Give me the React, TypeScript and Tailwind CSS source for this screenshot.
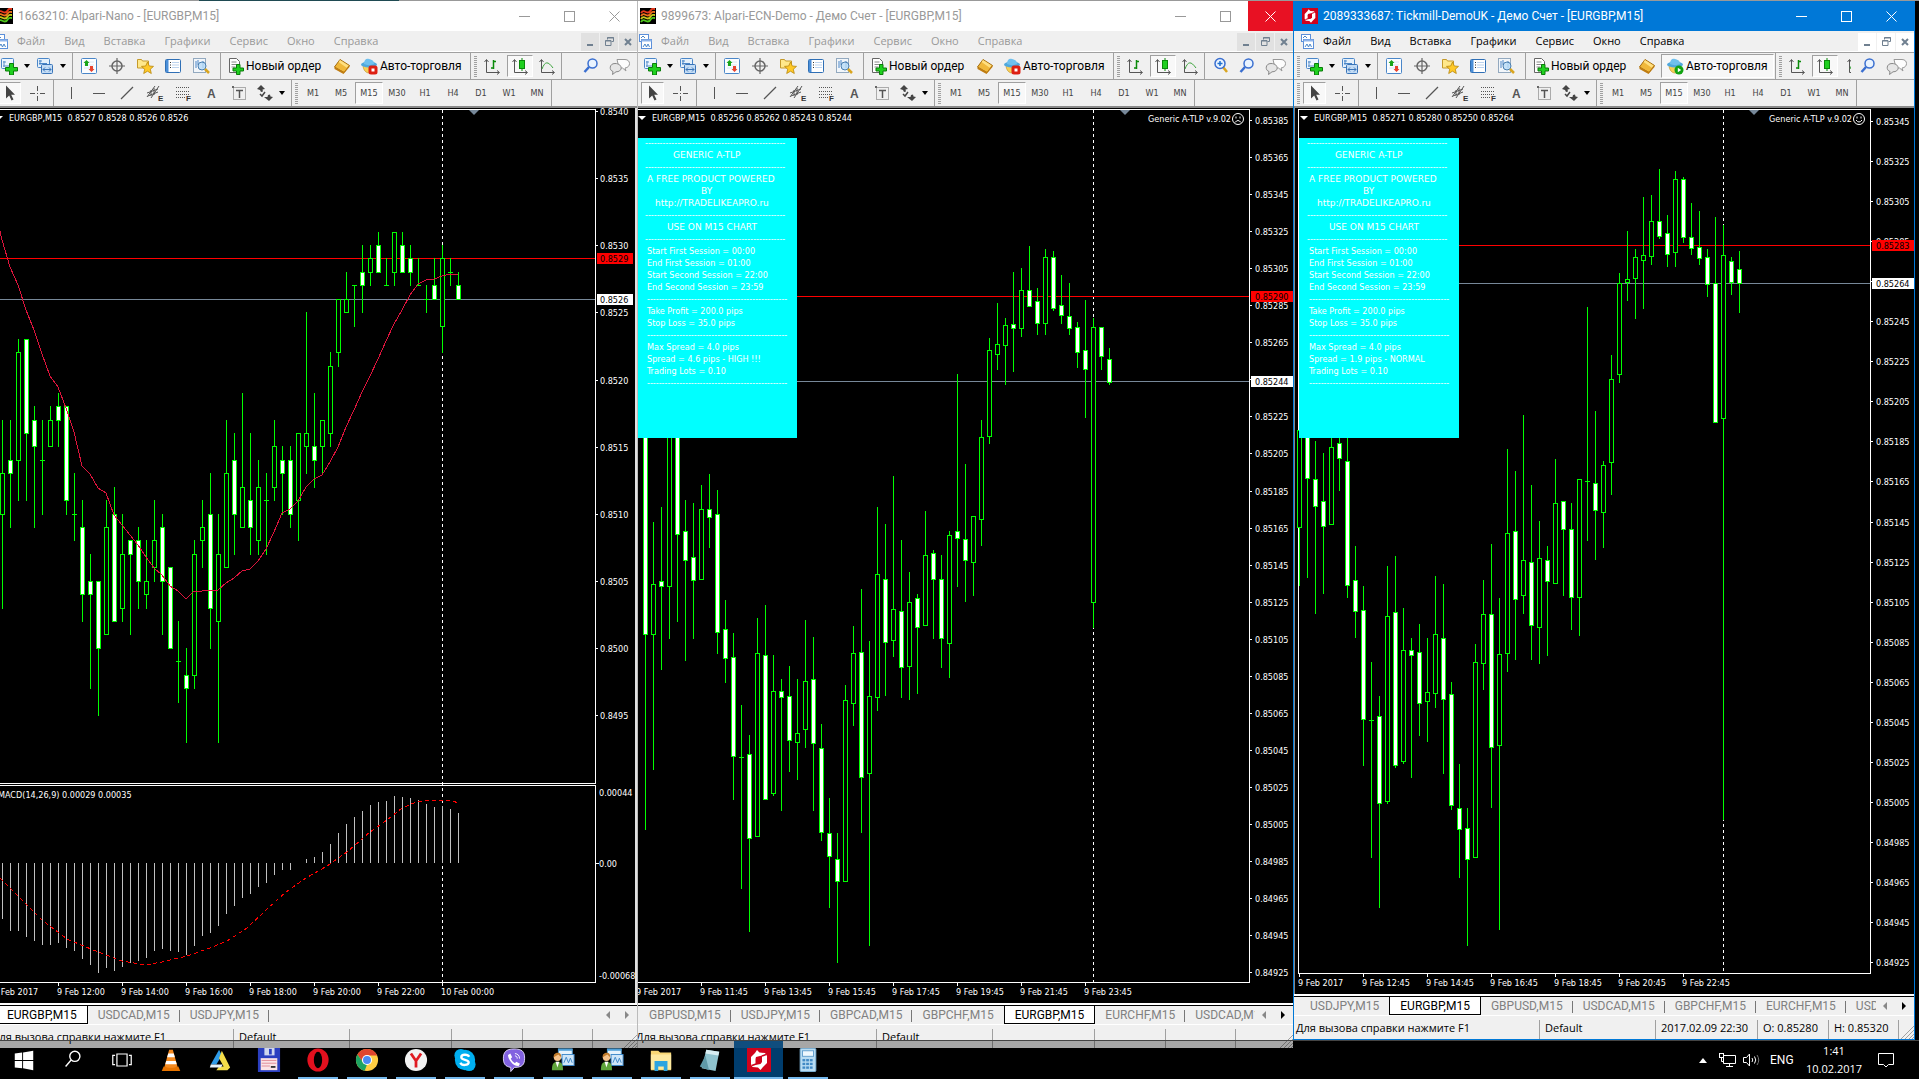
import React from "react";

type Candle = [number, number, number, number, number?];
type Label = { text: string; y: number };

const UI = "font-[Roboto,'Noto_Sans',sans-serif]";
const UI_SMALL = "font-['Open_Sans','Noto_Sans',sans-serif] text-[11px]";
const CHART_FONT = "'DejaVu Sans Condensed','DejaVu Sans',sans-serif";

/* ---------- chart data: [high, body top, body bottom, low, filled] ---------- */

const nanoPips: Candle[] = [
  [17, 13, 10, 3], [17, 14, 13, 9, 1], [23, 22, 14, 11], [23, 23, 16, 11, 1], [18, 17, 15, 9, 1], [17, 14, 14, 10],
  [18, 17, 15, 15], [19, 18, 17, 15, 1], [18, 18, 11, 10, 1], [13, 10, 10, 8], [11, 9, 4, 2, 1], [7, 5, 4, -3, 1],
  [5, 5, 0, -5, 1], [11, 9, 1, 1], [12, 10, 2, 2, 1], [10, 7, 3, 2], [8, 8, 7, 1, 1], [9, 8, 5, 3, 1],
  [8, 5, 4, 3], [11, 8, 6, 5], [10, 9, 5, 1, 1], [6, 6, 0, 0, 1], [2, -1, -1, -4], [0, -2, -3, -7, 1],
  [8, 7, -2, -3], [11, 9, 8, 6], [13, 10, 3, 0, 1], [10, 7, 2, -7], [17, 13, 6, 6], [16, 14, 10, 7, 1],
  [19, 12, 9, 9], [16, 11, 9, 7, 1], [14, 12, 8, 7], [13, 11, 11, 7], [17, 15, 12, 11], [15, 14, 13, 10, 1],
  [15, 14, 10, 9, 1], [16, 16, 11, 8], [25, 16, 15, 13], [19, 15, 14, 12, 1], [17, 17, 15, 13], [22, 21, 16, 15],
  [26, 26, 22, 21], [28, 26, 25, 25], [27, 27, 27, 24], [30, 28, 27, 25, 1], [30, 29, 28, 27], [31, 30, 28, 28, 1],
  [29, 27, 27, 27], [31, 31, 28, 27], [31, 30, 28, 28, 1], [30, 29, 28, 27, 1], [29, 27, 27, 27], [27, 26, 26, 25],
  [29, 27, 26, 26, 1], [30, 29, 24, 22], [29, 28, 28, 27], [28, 27, 26, 26, 1],
];
const pipY = (p: number) => Math.round(245 + (30 - p) * 13.43);
const nanoCandles = nanoPips.map((c) => [pipY(c[0]), pipY(c[1]), pipY(c[2]), pipY(c[3]), c[4]] as Candle);

const nanoAverage = [
  240, 267, 285, 310, 330, 354, 376, 387, 408, 432, 466, 474, 488, 493, 515, 525, 535, 545, 557, 568, 575, 586, 591, 599,
  591, 591, 590, 590, 583, 578, 571, 569, 561, 549, 532, 513, 509, 501, 487, 479, 475, 462, 447, 427, 410, 392, 376, 359,
  341, 324, 310, 295, 284, 280, 279, 276, 274, 275,
];
const macdBars = [
  919, 931, 931, 937, 941, 945, 945, 943, 948, 951, 959, 965, 973, 968, 971, 967, 963, 961, 958, 951, 949, 951, 952, 955,
  946, 936, 933, 926, 914, 906, 898, 894, 887, 883, 875, 870, 870, 863, 859, 857, 852, 844, 833, 824, 817, 811, 805, 802,
  801, 796, 797, 798, 800, 804, 807, 806, 809, 813,
];
const macdSignal =
  "0,878 18,896 42,920 67,939 98,952 122,961 145,965 162,962 187,956 210,948 227,941 247,928 265,911 286,892 306,878 327,866 347,852 370,832 387,820 402,808 414,803 427,800 443,800 453,801 458,803";

const ecnCandles: Candle[] = [
  [430, 430, 634, 829, 1], [522, 584, 634, 769], [507, 581, 586, 669, 1], [430, 430, 586, 638], [430, 430, 534, 621, 1],
  [500, 531, 560, 660, 1], [503, 557, 580, 638, 1], [485, 509, 579, 579], [474, 509, 517, 547, 1], [490, 514, 632, 653, 1],
  [600, 629, 658, 682, 1], [633, 657, 756, 799, 1], [705, 757, 757, 888], [735, 754, 838, 931, 1], [618, 653, 836, 836],
  [605, 655, 799, 799, 1], [655, 691, 793, 795], [679, 691, 697, 810, 1], [666, 696, 740, 771, 1], [679, 733, 742, 779],
  [620, 681, 729, 747], [637, 679, 743, 810, 1], [724, 748, 832, 840, 1], [798, 833, 856, 907, 1], [833, 859, 881, 962, 1],
  [685, 700, 881, 881], [626, 653, 703, 725], [589, 652, 777, 832, 1], [641, 696, 773, 945], [507, 574, 697, 710],
  [524, 579, 642, 695, 1], [476, 609, 640, 656], [540, 611, 667, 697, 1], [572, 602, 666, 699], [594, 598, 627, 693, 1],
  [511, 555, 625, 625], [550, 553, 579, 638, 1], [555, 579, 638, 667, 1], [531, 535, 643, 677], [374, 531, 538, 586, 1],
  [464, 539, 560, 601, 1], [516, 516, 562, 595], [420, 437, 519, 545], [338, 350, 436, 443], [303, 344, 354, 369],
  [318, 325, 345, 384], [272, 324, 328, 371, 1], [268, 290, 328, 336], [246, 290, 306, 306, 1], [288, 301, 323, 334, 1],
  [249, 257, 323, 334], [251, 257, 308, 310, 1], [275, 305, 315, 323, 1], [283, 316, 328, 334, 1], [322, 327, 352, 367, 1],
  [300, 350, 369, 417, 1], [318, 327, 602, 627], [327, 327, 356, 369, 1], [348, 359, 382, 384, 1],
];

const tickCandles: Candle[] = [
  [430, 430, 527, 585], [430, 430, 478, 577, 1], [441, 479, 506, 613, 1], [453, 501, 526, 593, 1], [430, 447, 524, 524],
  [430, 443, 458, 490, 1], [430, 461, 585, 597, 1], [546, 580, 611, 637, 1], [586, 610, 719, 765, 1], [662, 720, 720, 857],
  [696, 716, 803, 907, 1], [566, 616, 801, 803], [556, 612, 765, 767, 1], [608, 650, 761, 763], [638, 650, 655, 777, 1],
  [624, 652, 703, 735, 1], [638, 692, 701, 741], [576, 634, 693, 707], [584, 638, 699, 773, 1], [682, 694, 805, 809, 1],
  [764, 808, 829, 877, 1], [808, 828, 859, 945, 1], [644, 662, 857, 857], [580, 614, 663, 689], [544, 614, 747, 807, 1],
  [598, 654, 745, 929], [449, 533, 653, 671], [471, 531, 599, 659, 1], [415, 560, 595, 613], [485, 562, 625, 659, 1],
  [521, 558, 627, 663], [546, 560, 581, 655, 1], [459, 503, 583, 583], [501, 501, 529, 595, 1], [503, 529, 597, 629, 1],
  [479, 479, 597, 635], [307, 481, 481, 540], [411, 483, 510, 559, 1], [461, 465, 512, 547], [355, 379, 462, 494],
  [273, 283, 374, 382], [231, 279, 282, 300], [249, 257, 278, 318], [197, 255, 260, 308], [195, 221, 256, 264],
  [169, 221, 236, 238, 1], [215, 233, 254, 266, 1], [171, 179, 252, 266], [177, 179, 237, 242, 1], [203, 237, 248, 254, 1],
  [211, 247, 258, 264, 1], [249, 257, 284, 296, 1], [217, 283, 422, 422, 1], [225, 255, 418, 819], [257, 261, 282, 294, 1],
  [251, 269, 283, 312, 1],
];

const priceLabels = (start: number, step: number, count: number, y0: number, dy: number, digits: number): Label[] =>
  Array.from({ length: count }, (_, i) => ({
    text: ((start - step * i) / 100000).toFixed(digits),
    y: Math.round(y0 + dy * i),
  }));

/* ---------- chart drawing ---------- */

function Candles({ x0, data }: { x0: number; data: Candle[] }) {
  return (
    <g fill="#000" stroke="#0f0" strokeWidth="1">
      {data.map(([hi, top, bottom, lo, filled], i) => {
        const x = x0 + i * 8 + 0.5;
        return (
          <g key={i}>
            <line x1={x} x2={x} y1={hi} y2={lo + 1} />
            {top === bottom ? (
              <line x1={x - 2.5} x2={x + 2.5} y1={top + 0.5} y2={top + 0.5} />
            ) : (
              <rect x={x - 2} y={top + 0.5} width="4" height={bottom - top} fill={filled ? "#fff" : "#000"} />
            )}
          </g>
        );
      })}
    </g>
  );
}

interface ChartProps {
  dx: number;
  left: number;
  axis: number;
  bottom: number;
  x0: number;
  candles: Candle[];
  labels: Label[];
  dates: [number, string][];
  ask: [number, string];
  bid: [number, string];
  now: number;
  marker: number;
  title: string;
  titleX: number;
  expert?: "sad" | "happy";
  macd?: boolean;
  labelX: number;
}

function Chart(p: ChartProps) {
  const tagW = p.macd ? 36 : 42;
  return (
    <svg className="block h-full w-full" role="img" aria-label={p.title} fontFamily={CHART_FONT} fontSize="9" fill="#fff">
      <g transform={`translate(${-p.dx},-108)`}>
        <g shapeRendering="crispEdges">
          <g stroke="#fff" fill="none">
            <path d={`M${p.left} 109.5H${p.axis + 0.5}V${p.bottom + 0.5}H${p.left}`} />
            {p.left > p.dx && <path d={`M${p.left + 0.5} 109V${p.bottom}`} />}
            {p.macd && <path d={`M0 783.5H${p.axis}M0 785.5H${p.axis}`} />}
            {p.macd && <path d={`M0 784.5H${p.axis + 1}`} stroke="#000" />}
            <path d={`M${p.now + 0.5} 110V${p.bottom}`} strokeDasharray="3 3" />
            {p.labels.map((l) => (
              <path key={l.text} d={`M${p.axis + 1} ${l.y + 0.5}h2`} />
            ))}
            {p.dates.map(([x]) => (
              <path key={x} d={`M${x + 0.5} ${p.bottom + 1}v3`} />
            ))}
          </g>
          <path d={`M${p.left + (p.left > p.dx ? 1 : 0)} ${p.bid[0] + 0.5}H${p.axis}`} stroke="#778899" />
          <path d={`M${p.left + (p.left > p.dx ? 1 : 0)} ${p.ask[0] + 0.5}H${p.axis}`} stroke="#f00" />
          <Candles x0={p.x0} data={p.candles} />
          {p.macd && (
            <g stroke="#c0c0c0">
              {macdBars.map((y, i) => (
                <line key={i} x1={2.5 + i * 8} x2={2.5 + i * 8} y1="863" y2={y} />
              ))}
            </g>
          )}
          {p.macd && (
            <g fill="none">
              <polyline
                points={"0,231 " + nanoAverage.map((y, i) => `${2 + i * 8},${y}`).join(" ")}
                stroke="#dc143c"
              />
              <polyline points={macdSignal} stroke="#f00" strokeDasharray="4 3" />
            </g>
          )}
        </g>
        <path d={`M${p.marker - 5} 110h10l-5 5z`} fill="#778899" />
        {p.labels.map((l) => (
          <text key={l.text} x={p.labelX} y={l.y + 4}>
            {l.text}
          </text>
        ))}
        <g shapeRendering="crispEdges">
          <rect x={p.axis + 2} y={p.ask[0] - 5} width={tagW} height="11" fill="#f00" />
          <rect x={p.axis + 2} y={p.bid[0] - 5} width={tagW} height="11" fill="#fff" />
        </g>
        <g fill="#000">
          <text x={p.labelX} y={p.ask[0] + 4}>{p.ask[1]}</text>
          <text x={p.labelX} y={p.bid[0] + 4}>{p.bid[1]}</text>
        </g>
        {p.dates.map(([x, text]) => (
          <text key={x} x={x - 1} y={p.bottom + 13}>
            {text}
          </text>
        ))}
        <path d={`M${p.titleX - 14} 116h8l-4 4z`} />
        <text x={p.titleX} y="121" xmlSpace="preserve">
          {p.title}
        </text>
        {p.macd && (
          <g>
            <text x="-2" y="798">MACD(14,26,9) 0.00029 0.00035</text>
            <text x="599" y="796">0.00044</text>
            <text x="599" y="867">0.00</text>
            <text x="599" y="979">-0.00068</text>
            <path d="M596 863.5h3" stroke="#fff" />
          </g>
        )}
        {p.expert && (
          <g>
            <text x={p.axis - 18} y="122" textAnchor="end">
              Generic A-TLP v.9.02
            </text>
            <g transform={`translate(${p.axis - 11},119)`} fill="none" stroke="#fff">
              <circle r="5.5" />
              <path d={p.expert === "sad" ? "M-3 3.5Q0 -.5 3 3.5" : "M-3 1Q0 5 3 1"} />
              <path d="M-2 -2.5v2M2 -2.5v2" />
            </g>
          </g>
        )}
      </g>
    </svg>
  );
}

const dashes = "-".repeat(48);
const caps = "font-['DejaVu_Sans',sans-serif]";

function ExpertPanel({ spread, offset }: { spread: string; offset: string }) {
  const lines: [string, string][] = [
    ["pl-2", dashes], [`pl-9 ${caps}`, "GENERIC A-TLP"], ["pl-2", dashes], [`pl-2.5 ${caps}`, "A FREE PRODUCT POWERED"],
    [`pl-16 ${caps}`, "BY"], [`pl-[18px] ${caps}`, "http://TRADELIKEAPRO.ru"], ["pl-2", dashes],
    [`pl-[30px] ${caps}`, "USE ON M15 CHART"], ["pl-2", dashes],
    ["pl-2.5", "Start First Session = 00:00"], ["pl-2.5", "End First Session = 01:00"],
    ["pl-2.5", "Start Second Session = 22:00"], ["pl-2.5", "End Second Session = 23:59"], ["pl-2.5", dashes],
    ["pl-2.5", "Take Profit = 200.0 pips"], ["pl-2.5", "Stop Loss = 35.0 pips"], ["pl-2.5", dashes],
    ["pl-2.5", "Max Spread = 4.0 pips"], ["pl-2.5", spread], ["pl-2.5", "Trading Lots = 0.10"], ["pl-2.5", dashes],
  ];
  return (
    <div
      className={`absolute top-[30px] h-[300px] w-40 overflow-hidden bg-[#00ffff] font-['DejaVu_Sans_Condensed','DejaVu_Sans',sans-serif] text-[9px] leading-3 text-white ${offset}`}
    >
      <div className="-mt-px">
        {lines.map(([cls, text], i) => (
          <div key={i} className={`h-3 whitespace-nowrap ${cls}`}>
            {text}
          </div>
        ))}
      </div>
    </div>
  );
}

/* ---------- toolbar icons ---------- */

type IconProps = { w?: number; children: React.ReactNode };
const Svg = ({ w = 18, children }: IconProps) => (
  <svg width={w} height="18" viewBox={`0 0 ${w} 18`} fill="none" className="shrink-0" aria-hidden="true">
    {children}
  </svg>
);

const NewChart = () => (
  <Svg>
    <rect x="1.5" y="1.5" width="12" height="10" rx="1" fill="#eef6ff" stroke="#4a86c8" />
    <path d="M4 4v6M3 5h3M3 9h8" stroke="#5b8fc9" />
    <path d="M9.5 6.5h4v4h4v3.500h-4v4h-4v-4h-4v-3.500h4z" fill="#1fd01f" stroke="#0a7d0a" />
  </Svg>
);
const Profiles = () => (
  <Svg>
    <rect x="1.500" y="1.500" width="12" height="9" rx="1" fill="#e4f0fb" stroke="#4a86c8" />
    <path d="M4 3v5M3 4h3M3 6.500h8" stroke="#4a86c8" />
    <rect x="5.500" y="7.500" width="11" height="9" rx="1" fill="#c3dcf5" stroke="#3a74b8" />
    <path d="M7 12.500h8M9 10.500l-2 2 2 2M13 10.500l2 2-2 2" stroke="#3a74b8" />
  </Svg>
);
const MarketWatch = () => (
  <Svg>
    <rect x="1.500" y="1.500" width="15" height="15" rx="1" fill="#fbfdff" stroke="#4a86c8" />
    <path d="M4 5h10M4 8h10M4 11h10" stroke="#d8e6f4" />
    <path d="M6.500 3l3 3h-1.500v3H5V6H3.500z" fill="#19a519" />
    <path d="M11.500 15l3-3H13V9h-3v3H8.500z" fill="#e8432e" />
  </Svg>
);
const Target = () => (
  <Svg>
    <circle cx="9" cy="9" r="5" stroke="#666" strokeWidth="1.500" />
    <path d="M9 1v16M1 9h16" stroke="#666" strokeWidth="1.200" />
  </Svg>
);
const Navigator = () => (
  <Svg>
    <path d="M1.500 2.500h4l1 1.500h6v7h-11z" fill="#ffe88a" stroke="#c59a2b" />
    <path d="M11.500 5l1.800 4 4.200.4-3.200 2.800 1 4.300-3.800-2.300-3.800 2.300 1-4.300-3.200-2.800 4.200-.4z" fill="#ffc928" stroke="#b8860b" strokeWidth=".8" />
  </Svg>
);
const Terminal = () => (
  <Svg>
    <rect x="1.500" y="2.500" width="15" height="13" rx="1" fill="#fff" stroke="#2f6fb5" />
    <path d="M2 3h2.500v12H2z" fill="#4b8fd8" />
    <path d="M6 5.500h1M6 8h1M6 10.500h1" stroke="#333" />
    <path d="M8 5.500h7M8 8h7M8 10.500h7" stroke="#bcd3ee" />
  </Svg>
);
const Tester = () => (
  <Svg>
    <rect x="1.500" y="1.500" width="12" height="14" fill="#f2f6fa" stroke="#93a9bf" />
    <path d="M4 4v7M6 3v5M11 4v7" stroke="#4a86c8" />
    <circle cx="10" cy="9" r="4" fill="#b8dcf7" fillOpacity=".8" stroke="#4a7fb0" />
    <path d="M13 12l4 4" stroke="#d9a520" strokeWidth="2.500" />
  </Svg>
);
const NewOrder = () => (
  <Svg>
    <path d="M2.500 1.500h7l3 3v11h-10z" fill="#fff" stroke="#666" />
    <path d="M4.500 5h5M4.500 7.500h6M4.500 10h4" stroke="#888" />
    <path d="M9.500 7.500h3.500v3.500h3.500v3h-3.500v3.500H9.500V14H6v-3h3.500z" fill="#1fd01f" stroke="#0a7d0a" />
  </Svg>
);
const Book = () => (
  <Svg>
    <path d="M1.500 10L7 2.500l9.500 6L11 15.500z" fill="#f0b83a" stroke="#a36b0c" />
    <path d="M7 3l8.500 5.500-1.800 2.200L5.500 5z" fill="#ffdf7f" />
    <path d="M1.500 10v2l9 5 6-7V8.500L11 15z" fill="#c07d12" />
  </Svg>
);
const Expert = ({ on }: { on?: boolean }) => (
  <Svg>
    <path d="M3 8c0 5 3 8 6 8s6-3 6-8z" fill="#f7cf57" stroke="#b98a1c" strokeWidth=".6" />
    <ellipse cx="9" cy="7.500" rx="8" ry="3" fill="#4fa8dd" />
    <path d="M4 7c0-4 2-6 5-5s5 1 5 5c-3 1.500-7 1.500-10 0z" fill="#6fc0ee" />
    {on ? <circle cx="13" cy="13" r="4.500" fill="#12a312" /> : <rect x="8.500" y="8.500" width="9" height="9" rx="2.500" fill="#dd1f12" />}
    {on ? <path d="M11.800 10.800v4.400l3.400-2.200z" fill="#fff" /> : <path d="M11.500 11.500h3v3h-3z" fill="#fff" />}
  </Svg>
);
const axes = "M3.500 3v12.500H16M1.500 5l2-2.500 2 2.500M14 13.500l2.500 2-2.500 2";
const Bars = () => (
  <Svg>
    <path d={axes} stroke="#555" />
    <path d="M10.500 3v9M8 11h2.500M10.500 4.500H13" stroke="#0a8a0a" strokeWidth="1.500" />
  </Svg>
);
const CandleIcon = () => (
  <Svg>
    <path d={axes} stroke="#555" />
    <path d="M11 1v13" stroke="#0a8a0a" />
    <rect x="8.500" y="3.500" width="5" height="8" fill="#1fd01f" stroke="#0a8a0a" />
  </Svg>
);
const LineIcon = () => (
  <Svg>
    <path d={axes} stroke="#555" />
    <path d="M4 12C7 4 10 4 15 11" stroke="#3aa33a" />
  </Svg>
);
const Zoom = ({ plus }: { plus?: boolean }) => (
  <Svg w={16}>
    <path d={plus ? "M10 10l4 5" : "M6 10l-4.500 5"} stroke={plus ? "#d9a520" : "#3a6fd0"} strokeWidth="2.500" />
    <circle cx={plus ? 7 : 9.500} cy="6.500" r={plus ? 5 : 4.500} fill="#eaf4ff" stroke="#3a6fd0" strokeWidth="1.500" />
    {plus && <path d="M7 4v5M4.500 6.500h5" stroke="#1f6fd0" strokeWidth="1.500" />}
  </Svg>
);
const Chat = () => (
  <Svg w={22}>
    <path d="M8 2.500h8c6 0 6 8 0 8.500l1 3-3.500-3H10z" fill="#fdfdfd" stroke="#999" />
    <path d="M6 6.500c-6 0-6 7-2 8l-.5 3L7 14.800c7 .2 7-8.300-1-8.300z" fill="#e6e6e6" stroke="#888" />
  </Svg>
);

const Cursor = () => (
  <Svg>
    <path d="M5 1.500v13l3.200-3 2.300 5 2-1-2.300-4.700H14z" fill="#444" />
  </Svg>
);
const Cross = () => (
  <Svg>
    <path d="M9.500 2v5M9.500 12v5M2 9.500h5M12 9.500h5M9 9.500h1" stroke="#555" />
  </Svg>
);
const VLine = () => <Svg><path d="M9.500 3v12" stroke="#555" /></Svg>;
const HLine = () => <Svg><path d="M3 9.500h12" stroke="#555" /></Svg>;
const Trend = () => <Svg><path d="M3 15L15 3" stroke="#555" strokeWidth="1.200" /></Svg>;
const Channel = () => (
  <Svg>
    <path d="M1 13L9 2M5 14L13 2M1 9l11-4M2 12l10-4M5 6v6M8 4v7" stroke="#555" />
    <text x="12" y="17" fontSize="8" fontWeight="bold" fill="#333" fontFamily="Liberation Sans">E</text>
  </Svg>
);
const Fibo = () => (
  <Svg>
    <path d="M2 3.500h14M2 7.500h14M2 10.500h14M2 13.500h9" stroke="#555" strokeDasharray="1 1" />
    <text x="12" y="17" fontSize="8" fontWeight="bold" fill="#333" fontFamily="Liberation Sans">F</text>
  </Svg>
);
const TextA = () => (
  <Svg>
    <text x="5" y="14" fontSize="12" fontWeight="bold" fill="#555" fontFamily="Liberation Sans">A</text>
  </Svg>
);
const TextBox = () => (
  <Svg>
    <rect x="3.500" y="3.500" width="12" height="12" stroke="#666" strokeDasharray="1 1" />
    <path d="M2 2h2v2H2z" fill="#666" />
    <path d="M6 6.500h7M9.500 6.500V14" stroke="#555" strokeWidth="1.500" />
  </Svg>
);
const Arrows = () => (
  <Svg>
    <path d="M5 1l4 4-2.500.5.500 2-2 .5-1-2L1 5z" fill="#444" />
    <path d="M13 17l4-4-2.500-.5-.5-2-2 .5-.5 2L8 13z" fill="#444" />
    <path d="M4 10l2 2 3-4" stroke="#444" strokeWidth="1.500" />
  </Svg>
);
const Caret = ({ cls }: { cls: string }) => (
  <span className={`flex shrink-0 items-center justify-center ${cls}`}>
    <svg width="6" height="4" aria-hidden="true">
      <path d="M0 0h6L3 4z" />
    </svg>
  </span>
);
const ChartFile = () => (
  <svg width="14" height="16" viewBox="0 0 14 16" fill="none" className="shrink-0" aria-hidden="true">
    <rect x="1.500" y=".5" width="9" height="7" fill="#fff" stroke="#5b8fd9" />
    <rect x="3.500" y="5.500" width="10" height="9" fill="#fff" stroke="#5b8fd9" />
    <path d="M3.500 6.500h10" stroke="#8fb4ea" strokeWidth="2" />
    <path d="M5 13l2-3 1.500 3L10 10l1.500 3M3 4l2-2 2 2" stroke="#4a86c8" />
  </svg>
);
const AlpariLogo = () => (
  <svg width="16" height="16" viewBox="0 0 16 16" fill="none" className="shrink-0" aria-hidden="true">
    <path d="M0 0h16v16H0z" fill="#000" />
    {["#e8381c", "#f0701c", "#c8c81c", "#4fc81c"].map((c, i) => (
      <path key={c} d={`M1 ${5 + i * 3}c2-3 3-2 5-1s4 0 5-2 2-1 4-1`} stroke={c} strokeWidth="1.800" />
    ))}
  </svg>
);
const TickmillLogo = ({ size }: { size: number }) => (
  <svg width={size} height={size} viewBox="0 0 24 24" fill="none" className="shrink-0" aria-hidden="true">
    <path d="M0 0h24v24H0z" fill="#d0021b" />
    <path d="M10 2l2.500 2.500L18 5l2 3v7l-4 4-2.500 3-2.500-2.500L5.500 19 4 16V9l4-4z" fill="#fff" />
    <path d="M9 9l6-1.500V14l-1.500 2L8.500 17v-6z" fill="#d0021b" />
    <path d="M15 8l4-1.500M5 17.500L9 16" stroke="#d0021b" strokeWidth="1.500" />
  </svg>
);

/* ---------- window pieces ---------- */

const Sep = ({ cls = "" }: { cls?: string }) => (
  <span className={`h-full w-px shrink-0 bg-[#a0a0a0] ${cls}`} />
);
const Grip = ({ cls = "" }: { cls?: string }) => (
  <span className={`h-[21px] w-[3px] shrink-0 self-center bg-[repeating-linear-gradient(#a0a0a0_0_1px,transparent_1px_2px)] ${cls}`} />
);
const Tool = ({ name, cls = "w-7", on, children }: { name: string; cls?: string; on?: boolean; children: React.ReactNode }) => (
  <button
    type="button"
    aria-label={name}
    aria-pressed={on}
    className={`flex h-[22px] shrink-0 items-center justify-center overflow-hidden ${cls} ${on ? "border border-r-white border-b-white border-l-[#a0a0a0] border-t-[#a0a0a0] bg-[#f8f8f8]" : ""}`}
  >
    {children}
  </button>
);

const frames = ["M1", "M5", "M15", "M30", "H1", "H4", "D1", "W1", "MN"];
const menus = ["Файл", "Вид", "Вставка", "Графики", "Сервис", "Окно", "Справка"];

interface WindowProps {
  title: string;
  logo: React.ReactNode;
  active?: boolean;
  closeHot?: boolean;
  frame: string;
  titlePad: string;
  menuPad: string;
  shift: string;
  zoomIn?: boolean;
  clippedLine?: boolean;
  tabsPad: string;
  tabs: string[];
  current: string;
  tabsEndOn?: boolean;
  statusPad: string;
  statusFirst: string;
  statusCells: [string, string, string];
  children: React.ReactNode;
}

function TerminalWindow(w: WindowProps) {
  return (
    <section className={`flex min-w-0 flex-col overflow-hidden bg-[#f0f0f0] text-xs ${UI} ${w.frame}`}>
      <header
        className={`flex h-[30px] shrink-0 items-center ${w.titlePad} ${w.active ? "bg-[#0078d7] text-white" : "bg-white text-[#999]"}`}
      >
        {w.logo}
        <h2 className="ml-[5px] flex-1 truncate">{w.title}</h2>
        <div className="flex h-full">
          <button type="button" aria-label="Свернуть" className="flex w-[45px] items-center justify-center">
            <span className="h-px w-[11px] bg-current" />
          </button>
          <button type="button" aria-label="Развернуть" className="flex w-[45px] items-center justify-center">
            <span className="size-[11px] border border-current" />
          </button>
          <button
            type="button"
            aria-label="Закрыть"
            className={`flex w-[45px] items-center justify-center ${w.closeHot ? "bg-[#e81123] text-white" : ""}`}
          >
            <svg width="11" height="11" stroke="currentColor" aria-hidden="true">
              <path d="M.5.5l10 10M10.500.5l-10 10" />
            </svg>
          </button>
        </div>
      </header>

      <nav className={`flex h-[22px] shrink-0 items-center border-b border-[#a0a0a0] shadow-[inset_0_-1px_0_#fff] ${w.menuPad}`}>
        <ChartFile />
        <div className={`ml-[9px] flex flex-1 gap-[19px] ${UI_SMALL} ${w.active ? "text-black" : "text-[#999]"}`}>
          {menus.map((m) => (
            <button key={m} type="button">
              {m}
            </button>
          ))}
        </div>
        <div className="flex gap-px text-[#708090]">
          <button type="button" aria-label="Свернуть график" className={`flex h-[18px] w-[18px] items-center justify-center ${w.active ? "bg-white" : "bg-[#e1e1e1]"}`}>
            <span className="mt-1.5 h-0.5 w-1.5 bg-current" />
          </button>
          <button type="button" aria-label="Восстановить график" className={`flex h-[18px] w-[18px] items-center justify-center ${w.active ? "bg-white" : "bg-[#e1e1e1]"}`}>
            <svg width="9" height="9" fill="none" stroke="currentColor" aria-hidden="true">
              <path d="M2.500 2.500V.5h6v4h-2M2 1h7M.5 3.500h5.500v5H.5zM.5 4h5.500" />
            </svg>
          </button>
          <button type="button" aria-label="Закрыть график" className={`flex h-[18px] w-[18px] items-center justify-center ${w.active ? "bg-white" : "bg-[#e1e1e1]"}`}>
            <svg width="8" height="8" stroke="currentColor" strokeWidth="2" aria-hidden="true">
              <path d="M1 1l6 6M7 1L1 7" />
            </svg>
          </button>
        </div>
      </nav>

      <div className="flex h-[27px] shrink-0 items-center border-b border-[#a0a0a0] pr-1.5 text-black">
        <div className={`flex h-full min-w-0 items-center ${w.shift}`}>
          <Grip cls="ml-[3px] mr-[5px]" />
          <Tool name="Новый график" cls="w-[18px]"><NewChart /></Tool>
          <Caret cls="w-[18px]" />
          <Tool name="Профили" cls="w-[18px]"><Profiles /></Tool>
          <Caret cls="w-[18px]" />
          <Sep cls="mr-0.5" />
          <Tool name="Обзор рынка"><MarketWatch /></Tool>
          <Tool name="Окно данных"><Target /></Tool>
          <Tool name="Навигатор"><Navigator /></Tool>
          <Tool name="Терминал"><Terminal /></Tool>
          <Tool name="Тестер"><Tester /></Tool>
          <Sep cls="ml-[5px] mr-1.5" />
          <button type="button" className="mr-px flex w-[103px] shrink-0 items-center gap-px whitespace-nowrap">
            <NewOrder />
            Новый ордер
          </button>
          <Tool name="Редактор" cls="w-[22px] mr-[3px]"><Book /></Tool>
          <button
            type="button"
            aria-pressed={!!w.active}
            className={`mr-px flex h-6 w-[113px] shrink-0 items-center gap-0.5 whitespace-nowrap pl-1 ${w.active ? "border border-l-[#a0a0a0] border-t-[#a0a0a0] border-b-white border-r-white bg-[#f7f7f7]" : ""}`}
          >
            <Expert on={w.active} />
            Авто-торговля
          </button>
          <Sep cls="mr-[3px]" />
          <Grip cls="mr-0.5" />
          <Tool name="Бары" cls="w-[26px] mr-0.5"><Bars /></Tool>
          <Tool name="Свечи" cls="w-[26px]" on><CandleIcon /></Tool>
          <Tool name="Линия" cls={w.clippedLine ? "ml-2 w-[5px] justify-start!" : "w-7"}><LineIcon /></Tool>
          {!w.clippedLine && <Sep />}
          {w.zoomIn && <Tool name="Увеличить" cls="ml-2 w-4"><Zoom plus /></Tool>}
        </div>
        <div className="ml-auto flex shrink-0 gap-2.5">
          <Tool name="Поиск" cls="w-4"><Zoom /></Tool>
          <Tool name="Сообщения" cls="w-[22px]"><Chat /></Tool>
        </div>
      </div>

      <div className="flex h-7 shrink-0 items-center border-b-2 border-[#8a8a8a] text-[#444]">
        <div className={`flex h-full items-center ${w.shift}`}>
          <Grip cls="ml-[3px] mr-[3px]" />
          <Tool name="Курсор" cls="w-[23px]" on><Cursor /></Tool>
          <Tool name="Перекрестие" cls="w-8"><Cross /></Tool>
          <Sep cls="mr-[3px]" />
          <Tool name="Вертикальная линия"><VLine /></Tool>
          <Tool name="Горизонтальная линия"><HLine /></Tool>
          <Tool name="Линия тренда"><Trend /></Tool>
          <Tool name="Канал"><Channel /></Tool>
          <Tool name="Фибоначчи"><Fibo /></Tool>
          <Tool name="Текст"><TextA /></Tool>
          <Tool name="Метка"><TextBox /></Tool>
          <Tool name="Стрелки" cls="w-6"><Arrows /></Tool>
          <Caret cls="w-[10px]" />
          <Sep cls="ml-1 mr-[3px]" />
          <Grip cls="mr-px" />
          {frames.map((f) => (
            <button
              key={f}
              type="button"
              aria-pressed={f === "M15"}
              className={`h-[22px] w-7 shrink-0 font-['DejaVu_Sans_Condensed','DejaVu_Sans',sans-serif] text-[9px] ${f === "M15" ? "border border-l-[#a0a0a0] border-t-[#a0a0a0] border-b-white border-r-white bg-[#f8f8f8]" : ""}`}
            >
              {f}
            </button>
          ))}
          <Sep />
        </div>
      </div>

      <div className="relative min-h-0 flex-1 overflow-hidden bg-black">{w.children}</div>

      <div className="h-0.5 shrink-0 bg-white" />
      <div className="flex h-5 shrink-0 border-b border-white">
        <div className={`flex min-w-0 flex-1 overflow-hidden border-t border-black ${w.tabsPad}`}>
          {w.tabs.map((t, i) => {
            const on = t === w.current;
            const bar = !on && w.tabs[i + 1] !== w.current && i < w.tabs.length - (w.tabsEndOn ? 1 : 0);
            return (
              <button
                key={t}
                type="button"
                className={`relative flex h-[18px] shrink-0 items-center px-2.5 ${on ? "border-x border-b border-black bg-white text-black" : "text-[#808080]"}`}
              >
                {t}
                {bar && <span className="absolute right-0 top-1 h-3 w-px bg-[#777]" />}
              </button>
            );
          })}
        </div>
        <div className="flex w-[38px] shrink-0 items-center justify-around border-t border-black">
          <button type="button" aria-label="Назад">
            <svg width="5" height="8" fill="#888"><path d="M4 0v8L0 4z" /></svg>
          </button>
          <button type="button" aria-label="Вперёд">
            <svg width="5" height="8" fill={w.tabsEndOn ? "#000" : "#888"}><path d="M0 0v8l4-4z" /></svg>
          </button>
        </div>
      </div>

      <footer className={`flex h-[23px] shrink-0 items-center whitespace-nowrap pt-1 leading-4 text-black ${UI_SMALL} ${w.statusPad}`}>
        <span className={`h-full shrink-0 leading-4 ${w.statusFirst}`}>Для вызова справки нажмите F1</span>
        <span className="h-full w-[116px] shrink-0 border-l border-[#a0a0a0] pl-[5px] leading-4">Default</span>
        <span className="h-full w-[102px] shrink-0 border-l border-[#a0a0a0] pl-[5px] leading-4">{w.statusCells[0]}</span>
        <span className="h-full w-[71px] shrink-0 border-l border-[#a0a0a0] pl-[5px] leading-4">{w.statusCells[1]}</span>
        <span className="h-full w-[70px] shrink-0 border-l border-[#a0a0a0] pl-[5px] leading-4">{w.statusCells[2]}</span>
        <span className="h-full flex-1 border-l border-[#a0a0a0]" />
        <svg width="14" height="14" className="shrink-0 self-end" stroke="#a0a0a0" aria-hidden="true">
          <path d="M1 14L14 1M5 14l9-9M9 14l5-5M12 14l2-2" />
        </svg>
      </footer>
    </section>
  );
}

/* ---------- taskbar ---------- */

const MtPair = () => (
  <>
    <rect x="8" y="1" width="15" height="10" fill="#e6f3fc" stroke="#4f9fd6" />
    <path d="M8 2h15" stroke="#4f9fd6" strokeWidth="2" />
    <rect x="12" y="7" width="13" height="12" fill="#cfe6f8" stroke="#3a86c8" />
    <path d="M14 16l2.500-6 2.500 6 2-5 2 5" stroke="#3a86c8" />
    <circle cx="7" cy="10" r="4" fill="#f5c28a" />
    <path d="M3 10c-1-6 9-7 8 0l-3-3z" fill="#c07a2a" />
    <path d="M1 24c0-7 2-9 6-9s6 2 6 9z" fill="#5fa53c" />
    <path d="M5 15h4l-2 6z" fill="#fff" />
  </>
);

const apps: { name: string; open?: boolean; active?: boolean; art: React.ReactNode }[] = [
  { name: "Пуск", art: <path d="M3 6l8-1v8H3zM12 5l11-2v10H12zM3 14h8v8l-8-1zM12 14h11v10l-11-2z" fill="#fff" /> },
  { name: "Поиск", art: <g stroke="#fff" strokeWidth="1.500"><circle cx="15" cy="9" r="5.500" /><path d="M11 13l-6 7" /></g> },
  { name: "Представление задач", art: <path d="M7.500 6.500h11v13h-11zM5.500 8H3v10h2.500M20.500 8H23v10h-2.500" stroke="#fff" strokeWidth="1.300" /> },
  {
    name: "VLC",
    art: (
      <>
        <path d="M5 20h16l2 5H3z" fill="#e87400" />
        <path d="M11 2h4l5 18c-3 2-11 2-14 0z" fill="#f58a1f" />
        <path d="M10 6h6l1.200 4H8.800zM7.800 14h10.400l1 3.500H6.800z" fill="#fff" />
      </>
    ),
  },
  {
    name: "AIMP",
    art: (
      <>
        <path d="M12 2L3 18h6L15 8z" fill="#2f9be8" />
        <path d="M15 3l9 18-3 3H9l3-4h5L12 11z" fill="#f4dd4a" />
        <path d="M3 18h13l-2 3H2z" fill="#e8f3fb" />
      </>
    ),
  },
  {
    name: "Total Commander",
    art: (
      <>
        <path d="M1 0h24v26H1z" fill="#2b3fc0" />
        <path d="M8 0h11v8H8z" fill="#cfd6ee" />
        <path d="M13 1h3v6h-3z" fill="#2b3fc0" />
        <path d="M4 11h18v13H4z" fill="#fbe3e6" />
        <path d="M5 13.500h16M5 16.500h16M5 19.500h9" stroke="#e08a95" />
        <path d="M15 20.500h5" stroke="#333" strokeWidth="2" />
      </>
    ),
  },
  { name: "Opera", open: true, art: <><ellipse cx="13" cy="13" rx="11.500" ry="12.500" fill="#e3101e" /><ellipse cx="13" cy="13" rx="4.500" ry="9" fill="#000" /></> },
  {
    name: "Chrome",
    open: true,
    art: (
      <>
        <circle cx="13" cy="13" r="12" fill="#ffcd42" />
        <path d="M2.600 7A12 12 0 0 1 24 8.200H13L8 15z" fill="#e0452f" />
        <path d="M2.600 7L9 16l4 2-2.500 6.700A12 12 0 0 1 2.600 7z" fill="#1da462" />
        <circle cx="13" cy="13" r="5.500" fill="#fff" />
        <circle cx="13" cy="13" r="4.300" fill="#4a8af4" />
      </>
    ),
  },
  { name: "Яндекс", open: true, art: <><circle cx="13" cy="13" r="12" fill="#f2f2f2" /><path d="M7.500 6l5.500 8 5.500-8M13 14v7" stroke="#e01b22" strokeWidth="3" /></> },
  {
    name: "Skype",
    open: true,
    art: (
      <>
        <circle cx="8.500" cy="8" r="7" fill="#00aff0" />
        <circle cx="17.500" cy="18" r="7" fill="#00aff0" />
        <circle cx="13" cy="13" r="11" fill="#00aff0" />
        <path d="M17.500 9.500C16 6.500 9 6.500 9 10s8 2 8 5.500-7.500 4-9 .5" stroke="#fff" strokeWidth="2.500" />
      </>
    ),
  },
  {
    name: "Viber",
    open: true,
    art: (
      <>
        <path d="M13 1c9 0 11.500 3 11.500 10s-2.500 10-11 10l-4 4.500V21c-6-1-8-4-8-10S4 1 13 1z" fill="#8262e0" stroke="#e4dcfa" />
        <path d="M9 6l2 4-1.500 1.500c1 2.500 2.500 4 4.500 5l1.500-1.500 4 2-1.500 2.500C12 20 6.500 12 6.500 7.500z" fill="#fff" />
        <path d="M14 6c3 .3 5 2 5 5.500M14 8.500c1.500.2 2.500 1 2.500 3" stroke="#fff" />
      </>
    ),
  },
  { name: "MetaTrader", open: true, art: <MtPair /> },
  { name: "MetaTrader 2", open: true, art: <MtPair /> },
  {
    name: "Проводник",
    open: true,
    art: (
      <>
        <path d="M2 3h8l2 2h12v19H2z" fill="#f8d775" />
        <path d="M2 7h22v16H2z" fill="#fde9a0" />
        <path d="M6 25V14h14v11h-4v-5h-6v5z" fill="#2da4e0" />
      </>
    ),
  },
  {
    name: "Блокнот",
    open: true,
    art: (
      <>
        <path d="M9 2l14 2-4 21-15-3z" fill="#8fc3cf" />
        <path d="M9 2l14 2-1 4-14-2z" fill="#d8eef2" />
        <path d="M8 8l-6 12 10 4z" fill="#5f9aa8" />
      </>
    ),
  },
  { name: "Tickmill", open: true, active: true, art: null },
  {
    name: "Калькулятор",
    open: true,
    art: (
      <>
        <rect x="4.500" y=".5" width="17" height="25" rx="1" fill="#b8dcf3" stroke="#7fb6dc" />
        <rect x="7" y="3" width="12" height="6" fill="#eef8fe" stroke="#5f9ccc" />
        {[12, 16, 20].map((y) => [7, 11, 15].map((x) => <rect key={`${x}-${y}`} x={x} y={y} width="3" height="2.500" fill="#3f88c4" />))}
      </>
    ),
  },
];

function Taskbar() {
  return (
    <footer className={`relative z-10 -mt-2 flex h-[39px] shrink-0 flex-col border-t border-[#444] text-xs text-white ${UI}`}>
      <div className="h-[7px] shrink-0 bg-black/30" />
      <div className="min-h-0 flex-1 bg-black" />
      <div className="absolute inset-0 flex">
        <div className="-ml-px flex">
          {apps.map((a) => (
            <button
              key={a.name}
              type="button"
              aria-label={a.name}
              className={`flex w-[49px] shrink-0 flex-col items-center ${a.active ? "bg-[#00447a]/90" : ""}`}
            >
              <span className="flex flex-1 items-end pb-[5px]">
                {a.active ? (
                  <TickmillLogo size={24} />
                ) : (
                  <svg width="24" height="24" viewBox="0 0 26 26" fill="none" aria-hidden="true">
                    {a.art}
                  </svg>
                )}
              </span>
              <span className={`h-0.5 ${a.active ? "w-full" : "w-10"} ${a.open ? "bg-[#76b9ed]" : ""}`} />
            </button>
          ))}
        </div>
        <div className="ml-auto flex items-center pr-6">
          <button type="button" aria-label="Скрытые значки" className="mr-3">
            <svg width="8" height="5" fill="#fff" className="block"><path d="M0 5h8L4 0z" /></svg>
          </button>
          <svg width="17" height="14" fill="none" stroke="#fff" className="mr-[7px]" aria-hidden="true">
            <path d="M4.500 2.500h12v8h-12zM7 13.500h7M10.500 11v2" />
            <rect x=".5" y=".5" width="4" height="4" fill="#000" />
            <path d="M2.500 4.500v4H5" />
          </svg>
          <svg width="17" height="14" fill="none" stroke="#fff" className="mr-2.5" aria-hidden="true">
            <path d="M.5 4.500h3l3-3.500v12l-3-3.500h-3zM9 5q1.500 2 0 4M11.500 3.500q2.500 3.500 0 7" />
            <path d="M14 2q3.500 5 0 10" stroke="#777" />
          </svg>
          <span className="mr-3 w-6">ENG</span>
          <time className="mr-4 w-14 text-center font-['Open_Sans','Noto_Sans',sans-serif] text-[11px] leading-[18px]">
            1:41
            <br />
            10.02.2017
          </time>
          <button type="button" aria-label="Уведомления">
            <svg width="17" height="16" fill="none" stroke="#fff" className="block"><path d="M.5 1.500h15v11h-5l-2.500 2.500-2.500-2.500h-5z" /></svg>
          </button>
        </div>
      </div>
    </footer>
  );
}

const dates = (x: number, names: string[]) => names.map((n, i) => [x + i * 64, n] as [number, string]);

export default function App() {
  return (
    <div className="flex h-screen flex-col overflow-hidden bg-black">
      <div className="flex h-px shrink-0 bg-[#999]">
        <span className="ml-[199px] w-[200px] bg-[#1f4a52]" />
      </div>
      <main className="grid min-h-0 flex-1 grid-cols-[637fr_656fr_626fr]">
        <TerminalWindow
          title="1663210: Alpari-Nano - [EURGBP,M15]"
          logo={<AlpariLogo />}
          frame=""
          titlePad="-ml-[3px]"
          menuPad="-ml-1.5"
          shift="-ml-[11px]"
          tabsPad="-ml-1"
          tabs={["EURGBP,M15", "USDCAD,M15", "USDJPY,M15"]}
          current="EURGBP,M15"
          statusPad="-ml-2"
          statusFirst="w-[241px]"
          statusCells={["", "", ""]}
        >
          <Chart
            macd
            dx={0}
            left={0}
            axis={595}
            bottom={982}
            x0={2}
            candles={nanoCandles}
            labels={priceLabels(85400, 50, 10, 111, 67.15, 4)}
            dates={dates(-6, ["9 Feb 2017", "9 Feb 12:00", "9 Feb 14:00", "9 Feb 16:00", "9 Feb 18:00", "9 Feb 20:00", "9 Feb 22:00", "10 Feb 00:00"])}
            ask={[258, "0.8529"]}
            bid={[299, "0.8526"]}
            now={442}
            marker={474}
            title="EURGBP,M15  0.8527 0.8528 0.8526 0.8526"
            titleX={9}
            labelX={600}
          />
          <div className="absolute inset-y-0 right-0 w-0.5 bg-[#e0e0e0]" />
        </TerminalWindow>

        <TerminalWindow
          title="9899673: Alpari-ECN-Demo - Демо Счет - [EURGBP,M15]"
          logo={<AlpariLogo />}
          closeHot
          zoomIn
          frame="border-l border-[#bbb]"
          titlePad="pl-0.5"
          menuPad=""
          shift="-ml-1.5"
          tabsPad="pl-px"
          tabs={["GBPUSD,M15", "USDJPY,M15", "GBPCAD,M15", "GBPCHF,M15", "EURGBP,M15", "EURCHF,M15", "USDCAD,M15"]}
          current="EURGBP,M15"
          tabsEndOn
          statusPad="-ml-0.5"
          statusFirst="w-[240px]"
          statusCells={["", "", ""]}
        >
          <Chart
            dx={638}
            left={638}
            axis={1249}
            bottom={982}
            x0={645}
            candles={ecnCandles}
            labels={priceLabels(85385, 20, 24, 120, 37.05, 5)}
            dates={dates(637, ["9 Feb 2017", "9 Feb 11:45", "9 Feb 13:45", "9 Feb 15:45", "9 Feb 17:45", "9 Feb 19:45", "9 Feb 21:45", "9 Feb 23:45"])}
            ask={[296, "0.85290"]}
            bid={[381, "0.85244"]}
            now={1093}
            marker={1125}
            title="EURGBP,M15  0.85256 0.85262 0.85243 0.85244"
            titleX={652}
            expert="sad"
            labelX={1255}
          />
          <ExpertPanel spread="Spread = 4.6 pips - HIGH !!!" offset="-left-px" />
        </TerminalWindow>

        <TerminalWindow
          title="2089333687: Tickmill-DemoUK - Демо Счет - [EURGBP,M15]"
          logo={<TickmillLogo size={16} />}
          active
          frame="mb-2 mr-1 border-x border-b border-[#0078d7]"
          titlePad="pl-2"
          menuPad="pl-1.5"
          shift=""
          clippedLine
          tabsPad="pl-1.5"
          tabs={["USDJPY,M15", "EURGBP,M15", "GBPUSD,M15", "USDCAD,M15", "GBPCHF,M15", "EURCHF,M15", "USDCHF,M15"]}
          current="EURGBP,M15"
          tabsEndOn
          statusPad="pl-0.5"
          statusFirst="w-[243px]"
          statusCells={["2017.02.09 22:30", "O: 0.85280", "H: 0.85320"]}
        >
          <Chart
            dx={1294}
            left={1298}
            axis={1870}
            bottom={973}
            x0={1299}
            candles={tickCandles}
            labels={priceLabels(85345, 20, 22, 121, 40.05, 5)}
            dates={dates(1299, ["9 Feb 2017", "9 Feb 12:45", "9 Feb 14:45", "9 Feb 16:45", "9 Feb 18:45", "9 Feb 20:45", "9 Feb 22:45"])}
            ask={[245, "0.85283"]}
            bid={[283, "0.85264"]}
            now={1723}
            marker={1754}
            title="EURGBP,M15  0.85271 0.85280 0.85250 0.85264"
            titleX={1314}
            expert="happy"
            labelX={1876}
          />
          <ExpertPanel spread="Spread = 1.9 pips - NORMAL" offset="left-[5px]" />
          <div className="absolute inset-y-0 left-0 w-px bg-[#888]" />
        </TerminalWindow>
      </main>
      <Taskbar />
    </div>
  );
}
